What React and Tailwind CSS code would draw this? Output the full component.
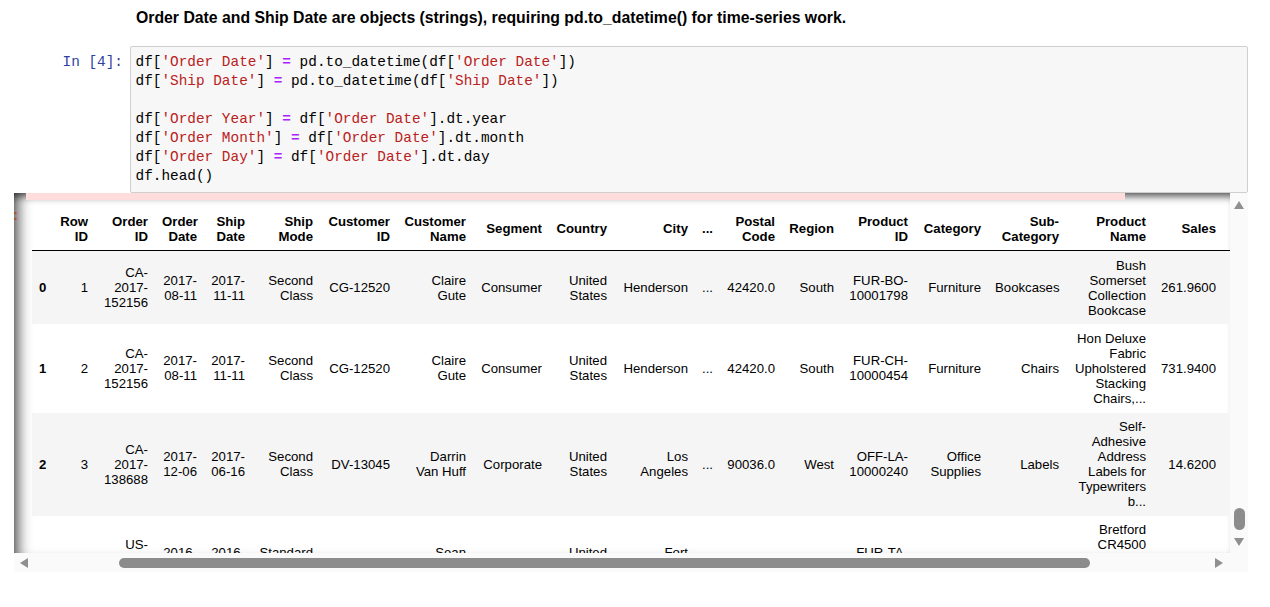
const colW = [
  "w-[21px]", "w-[42px]", "w-[60px]", "w-[49px]", "w-[48px]", "w-[68px]", "w-[77px]",
  "w-[76px]", "w-[76px]", "w-[65px]", "w-[81px]", "w-[25px]", "w-[62px]", "w-[59px]",
  "w-[74px]", "w-[73px]", "w-[78px]", "w-[87px]", "w-[70px]", "w-[80px]",
];

const header = [
  "", "Row\nID", "Order\nID", "Order\nDate", "Ship\nDate", "Ship\nMode", "Customer\nID",
  "Customer\nName", "Segment", "Country", "City", "...", "Postal\nCode", "Region",
  "Product\nID", "Category", "Sub-\nCategory", "Product\nName", "Sales", "Quantity",
];

const rows = [
  ["0", "1", "CA-\n2017-\n152156", "2017-\n08-11", "2017-\n11-11", "Second\nClass", "CG-12520", "Claire\nGute", "Consumer", "United\nStates", "Henderson", "...", "42420.0", "South", "FUR-BO-\n10001798", "Furniture", "Bookcases", "Bush\nSomerset\nCollection\nBookcase", "261.9600", "2"],
  ["1", "2", "CA-\n2017-\n152156", "2017-\n08-11", "2017-\n11-11", "Second\nClass", "CG-12520", "Claire\nGute", "Consumer", "United\nStates", "Henderson", "...", "42420.0", "South", "FUR-CH-\n10000454", "Furniture", "Chairs", "Hon Deluxe\nFabric\nUpholstered\nStacking\nChairs,...", "731.9400", "3"],
  ["2", "3", "CA-\n2017-\n138688", "2017-\n12-06", "2017-\n06-16", "Second\nClass", "DV-13045", "Darrin\nVan Huff", "Corporate", "United\nStates", "Los\nAngeles", "...", "90036.0", "West", "OFF-LA-\n10000240", "Office\nSupplies", "Labels", "Self-\nAdhesive\nAddress\nLabels for\nTypewriters\nb...", "14.6200", "2"],
  ["3", "4", "US-\n2016-\n108966", "2016-\n10-11", "2016-\n10-18", "Standard\nClass", "SO-20335", "Sean\nO'Donnell", "Consumer", "United\nStates", "Fort\nLauderdale", "...", "33311.0", "South", "FUR-TA-\n10000577", "Furniture", "Tables", "Bretford\nCR4500\nSeries Slim\nRectangular\nTable", "957.5775", "5"],
];

function Str({ children }) {
  return <span className="text-[#BA2121]">{children}</span>;
}

function Eq() {
  return <span className="font-bold text-[#AA22FF]">=</span>;
}

function Arrow({ dir }) {
  const pts = {
    left: "8,0 8,10 0,5",
    right: "0,0 0,10 8,5",
    up: "0,8 10,8 5,0",
    down: "0,0 10,0 5,8",
  }[dir];
  const vertical = dir === "up" || dir === "down";
  return (
    <svg width={vertical ? 10 : 8} height={vertical ? 8 : 10} viewBox={vertical ? "0 0 10 8" : "0 0 8 10"} className="shrink-0">
      <polygon points={pts} fill="#8f8f8f" />
    </svg>
  );
}

export default function App() {
  return (
    <div className="min-h-screen bg-white pt-[8px] font-['Liberation_Sans',Arial,sans-serif] text-black">
      <div className="ml-[14px] w-[1234px]">
        <div className="h-[19px] pl-[122px] text-[15.8px] font-bold leading-[19px]">
          Order Date and Ship Date are objects (strings), requiring pd.to_datetime() for time-series work.
        </div>

        <div className="mt-[19px] flex font-['Liberation_Mono',monospace] text-[14.4px]">
          <div className="w-[116px] shrink-0 pr-[7px] pt-[6.5px] text-right leading-[19px] text-[#303F9F]">In [4]:</div>
          <div className="flex-1 rounded-[2px] border border-[#cfcfcf] bg-[#f7f7f7] pb-[6px] pl-[4.5px] pt-[6px] leading-[19px] whitespace-pre">
            <div>df[<Str>'Order Date'</Str>] <Eq /> pd.to_datetime(df[<Str>'Order Date'</Str>])</div>
            <div>df[<Str>'Ship Date'</Str>] <Eq /> pd.to_datetime(df[<Str>'Ship Date'</Str>])</div>
            <div className="h-[19px]"></div>
            <div>df[<Str>'Order Year'</Str>] <Eq /> df[<Str>'Order Date'</Str>].dt.year</div>
            <div>df[<Str>'Order Month'</Str>] <Eq /> df[<Str>'Order Date'</Str>].dt.month</div>
            <div>df[<Str>'Order Day'</Str>] <Eq /> df[<Str>'Order Date'</Str>].dt.day</div>
            <div>df.head()</div>
          </div>
        </div>

        <div className="flex flex-col">
          <div className="flex h-[360px]">
            <div className="flex min-w-0 flex-1 overflow-hidden shadow-[inset_14px_0_14px_-10px_rgba(0,0,0,0.7),inset_0_9px_8px_-6px_rgba(0,0,0,0.7)]">
              <div className="flex w-[12px] shrink-0 justify-end overflow-hidden pt-[15px]">
                <div className="mr-[6px] shrink-0 whitespace-nowrap font-['Liberation_Mono',monospace] text-[14px] leading-[16px] text-[#D84315]">Out[4]:</div>
              </div>
              <div className="min-w-0 flex-1">
                <div className="h-[7px] w-[1099px] bg-[#ffdddd]"></div>
                <table className="ml-[6px] mt-[7px] w-[1271px] table-fixed border-collapse text-[13.2px] leading-[15px]">
                  <colgroup>
                    {colW.map((c, i) => (
                      <col key={i} className={c} />
                    ))}
                  </colgroup>
                  <thead>
                    <tr className="border-b border-black">
                      {header.map((h, i) => (
                        <th key={i} className="whitespace-pre px-[7px] py-[6.6px] text-right align-middle font-bold">{h}</th>
                      ))}
                    </tr>
                  </thead>
                  <tbody>
                    {rows.map((r, ri) => (
                      <tr key={ri} className={ri % 2 === 0 ? "bg-[#f5f5f5]" : ""}>
                        {r.map((c, ci) =>
                          ci === 0 ? (
                            <th key={ci} className="whitespace-pre px-[7px] py-[6.6px] text-right align-middle font-bold">{c}</th>
                          ) : (
                            <td key={ci} className="whitespace-pre px-[7px] py-[6.6px] text-right align-middle">{c}</td>
                          )
                        )}
                      </tr>
                    ))}
                  </tbody>
                </table>
              </div>
            </div>
            <div className="flex w-[18px] shrink-0 flex-col items-center bg-[#fafafa] pb-[7px] pt-[8px]">
              <Arrow dir="up" />
              <div className="flex-1"></div>
              <div className="h-[22px] w-[11px] rounded-full bg-[#8c8c8c]"></div>
              <div className="h-[8px]"></div>
              <Arrow dir="down" />
            </div>
          </div>
          <div className="flex h-[19px] items-center bg-[#fafafa]">
            <div className="w-[6px] shrink-0"></div>
            <Arrow dir="left" />
            <div className="w-[91px] shrink-0"></div>
            <div className="h-[10px] w-[971px] shrink-0 rounded-full bg-[#8c8c8c]"></div>
            <div className="flex-1"></div>
            <Arrow dir="right" />
            <div className="w-[25px] shrink-0"></div>
          </div>
        </div>
      </div>
    </div>
  );
}
